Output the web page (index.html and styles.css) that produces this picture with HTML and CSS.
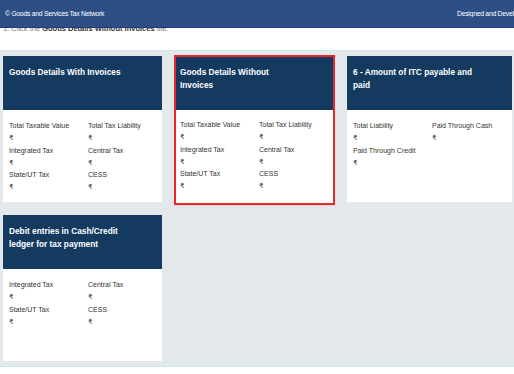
FILE: index.html
```html
<html lang="en">
<head>
<meta charset="UTF-8">
<meta name="viewport" content="width=device-width, initial-scale=1.0">
<title>Return Filing - Tiles</title>
<link rel="stylesheet" href="styles.css">
</head>
<body>
<header class="topbar">
  <span class="copy">&copy; Goods and Services Tax Network</span>
  <span class="credit">Designed and Developed by GSTN</span>
</header>
<div class="step">
  <p>1. Click the <b>Goods Details Without Invoices</b> tile.</p>
</div>
<main class="board">
  <section class="tile">
    <h3 class="tile-head">Goods Details With Invoices</h3>
    <div class="tile-body">
      <div class="cell"><span class="lbl">Total Taxable Value</span><span class="val">&#8377;</span></div>
      <div class="cell"><span class="lbl">Total Tax Liability</span><span class="val">&#8377;</span></div>
      <div class="cell"><span class="lbl">Integrated Tax</span><span class="val">&#8377;</span></div>
      <div class="cell"><span class="lbl">Central Tax</span><span class="val">&#8377;</span></div>
      <div class="cell"><span class="lbl">State/UT Tax</span><span class="val">&#8377;</span></div>
      <div class="cell"><span class="lbl">CESS</span><span class="val">&#8377;</span></div>
    </div>
  </section>
  <section class="tile tile-active">
    <h3 class="tile-head">Goods Details Without<br>Invoices</h3>
    <div class="tile-body">
      <div class="cell"><span class="lbl">Total Taxable Value</span><span class="val">&#8377;</span></div>
      <div class="cell"><span class="lbl">Total Tax Liability</span><span class="val">&#8377;</span></div>
      <div class="cell"><span class="lbl">Integrated Tax</span><span class="val">&#8377;</span></div>
      <div class="cell"><span class="lbl">Central Tax</span><span class="val">&#8377;</span></div>
      <div class="cell"><span class="lbl">State/UT Tax</span><span class="val">&#8377;</span></div>
      <div class="cell"><span class="lbl">CESS</span><span class="val">&#8377;</span></div>
    </div>
  </section>
  <section class="tile">
    <h3 class="tile-head">6 - Amount of ITC payable and<br>paid</h3>
    <div class="tile-body">
      <div class="cell"><span class="lbl">Total Liability</span><span class="val">&#8377;</span></div>
      <div class="cell"><span class="lbl">Paid Through Cash</span><span class="val">&#8377;</span></div>
      <div class="cell"><span class="lbl">Paid Through Credit</span><span class="val">&#8377;</span></div>
    </div>
  </section>
  <section class="tile">
    <h3 class="tile-head">Debit entries in Cash/Credit<br>ledger for tax payment</h3>
    <div class="tile-body">
      <div class="cell"><span class="lbl">Integrated Tax</span><span class="val">&#8377;</span></div>
      <div class="cell"><span class="lbl">Central Tax</span><span class="val">&#8377;</span></div>
      <div class="cell"><span class="lbl">State/UT Tax</span><span class="val">&#8377;</span></div>
      <div class="cell"><span class="lbl">CESS</span><span class="val">&#8377;</span></div>
    </div>
  </section>
</main>
</body>
</html>
```

FILE: styles.css
```css
:root{--bar:#2d4f86;--navy:#143a5f;--board:#e3e8eb;--edge:#cfe8ee;--red:#e8262b;--text:#333}
*{box-sizing:border-box;margin:0;padding:0}
body{width:514px;overflow:hidden;font-family:"Liberation Sans",Arial,"DejaVu Sans",sans-serif;color:var(--text);background:#fff}
.topbar{display:flex;align-items:center;height:28px;padding-left:5px;background:var(--bar);border-bottom:1px solid #1f3d6e;color:#fff;font-size:6.8px;letter-spacing:-0.25px;white-space:nowrap}
.copy{flex:1}
.credit{flex:none;width:57px;overflow:hidden}
.step{height:7px;overflow:hidden;padding-left:3px}
.step p{margin-top:-4px;font-size:7.5px;line-height:10px;color:#777}
.step b{color:#333}
.board{margin-top:15px;padding:5px 2px 5px 3px;background:var(--board);border-top:1px solid var(--edge);border-bottom:1px solid var(--edge);display:grid;grid-template-columns:159px 161px 165px;column-gap:12px;row-gap:10px;align-items:start}
.tile{height:146px;background:#fff;display:flex;flex-direction:column}
.tile-active{height:150px;margin-top:-1px;border:2px solid var(--red);box-shadow:0 1px 0 #d2d6d9}
.tile-head{height:54px;flex:none;padding:10px 6px 0;background:var(--navy);color:#fff;font-size:8.3px;font-weight:bold;line-height:13px}
.tile-active .tile-head{height:53px;padding:9px 4px 0}
.tile-body{padding:10px 6px 0;display:grid;grid-template-columns:79px 1fr;align-content:start}
.tile-active .tile-body{padding:9px 4px 0}
.cell{display:flex;flex-direction:column;font-size:7px;color:#333}
.lbl{line-height:12px;white-space:nowrap}
.val{line-height:12.5px;font-family:"DejaVu Sans","Noto Sans",sans-serif;font-size:7px}
```
